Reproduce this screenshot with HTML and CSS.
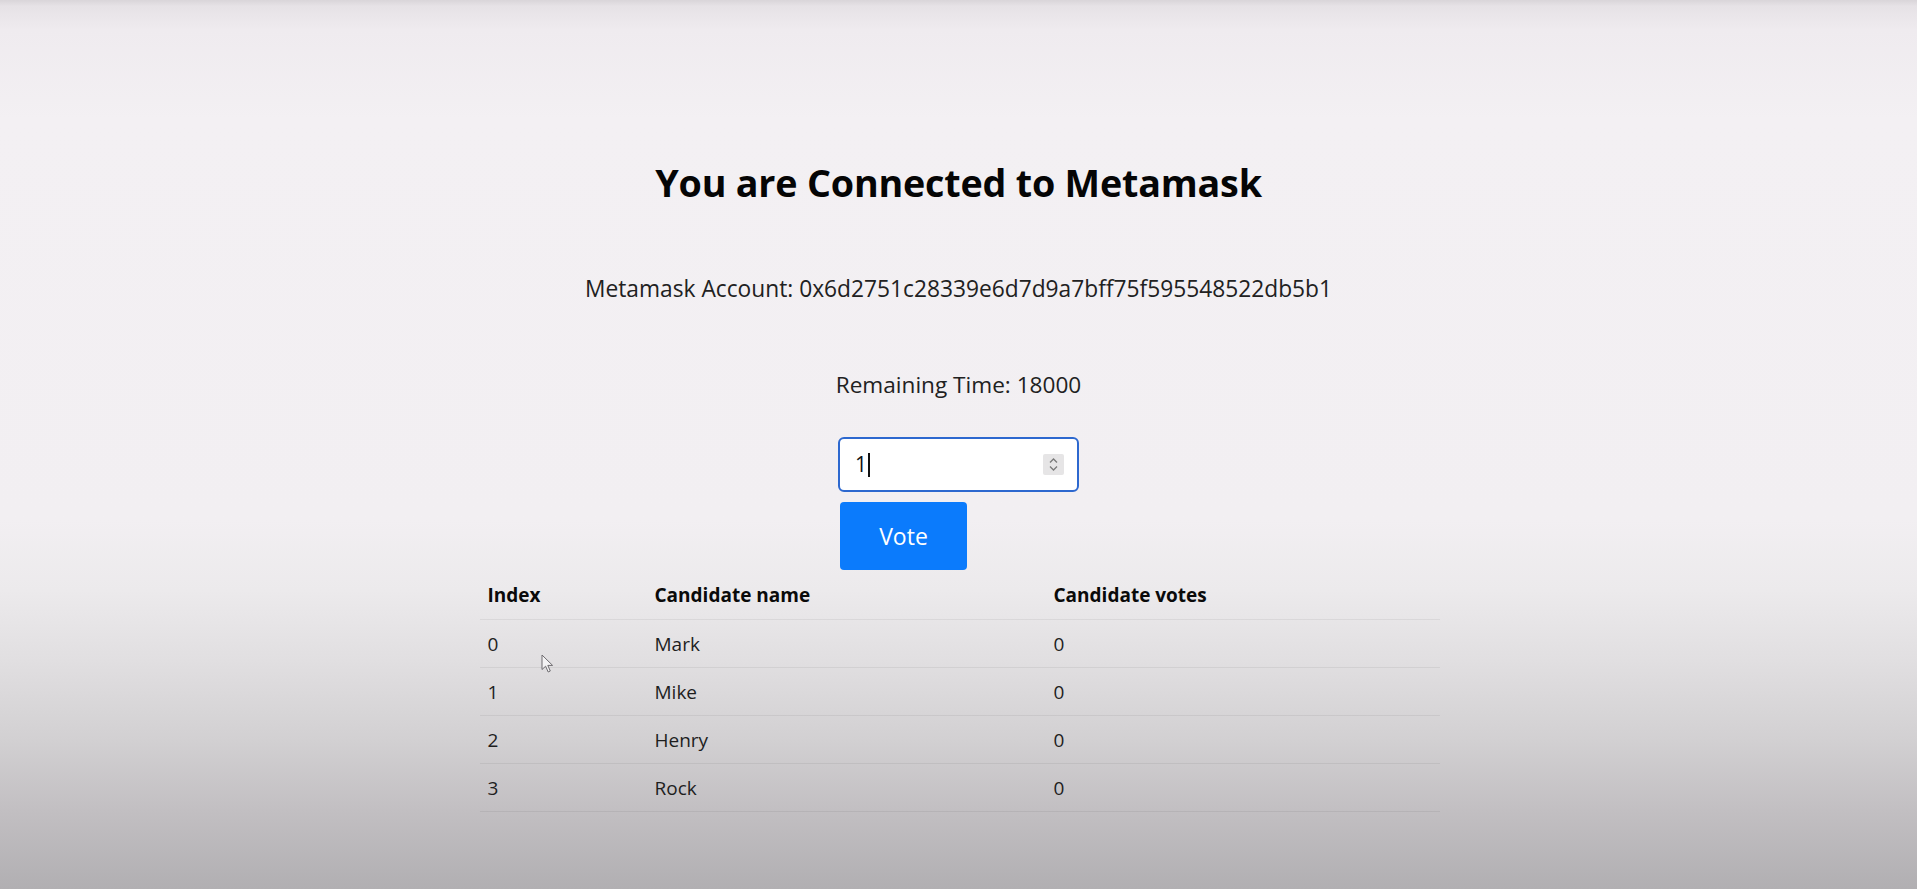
FILE: index.html
```html
<!DOCTYPE html>
<html lang="en">
<head>
<meta charset="utf-8">
<title>Voting dApp</title>
<link rel="stylesheet" href="styles.css">
</head>
<body>
<main class="page">
  <h1 class="title">You are Connected to Metamask</h1>
  <p class="account">Metamask Account: 0x6d2751c28339e6d7d9a7bff75f595548522db5b1</p>
  <p class="remaining">Remaining Time: 18000</p>
  <div class="vote-form">
    <div class="number-input">
      <span class="value">1</span><span class="caret"></span>
      <span class="spinner">
        <svg width="21" height="21" viewBox="0 0 21 21">
          <path d="M7 8.5 L10.5 5 L14 8.5" fill="none" stroke="#7a7a7a" stroke-width="1.3"/>
          <path d="M7 12.5 L10.5 16 L14 12.5" fill="none" stroke="#7a7a7a" stroke-width="1.3"/>
        </svg>
      </span>
    </div>
    <button class="vote-btn" type="button">Vote</button>
  </div>
  <table class="candidates">
    <colgroup>
      <col class="col-index">
      <col class="col-name">
      <col class="col-votes">
    </colgroup>
    <thead>
      <tr><th>Index</th><th>Candidate name</th><th>Candidate votes</th></tr>
    </thead>
    <tbody>
      <tr><td>0</td><td>Mark</td><td>0</td></tr>
      <tr><td>1</td><td>Mike</td><td>0</td></tr>
      <tr><td>2</td><td>Henry</td><td>0</td></tr>
      <tr><td>3</td><td>Rock</td><td>0</td></tr>
    </tbody>
  </table>
</main>
<svg class="cursor" width="14" height="20" viewBox="0 0 14 20">
  <path d="M1 1 L1 15.5 L4.6 12.2 L7.2 18 L9.3 17 L6.8 11.4 L11.6 11.4 Z" fill="#f4f3f4" stroke="#6e6c70" stroke-width="1" stroke-linejoin="round"/>
</svg>
</body>
</html>
```
FILE: styles.css
```css
html, body {
  margin: 0;
  padding: 0;
}
body {
  height: 889px;
  overflow: hidden;
  font-family: "Open Sans", "Noto Sans", sans-serif;
  color: #212121;
  background: linear-gradient(to bottom,
    #d9d5d9 0px,
    #e6e2e6 6px,
    #efebef 30px,
    #f3f0f3 120px,
    #f2eff2 520px,
    #eceaec 590px,
    #e1dfe1 660px,
    #d2d0d2 740px,
    #c2bfc2 810px,
    #b1afb2 889px);
  position: relative;
}
.page {
  display: flex;
  flex-direction: column;
  align-items: center;
}
.title {
  margin: 159px 0 0;
  font-size: 37.7px;
  line-height: 48px;
  font-weight: 700;
  color: #050505;
  letter-spacing: -0.2px;
}
.account {
  margin: 65px 0 0;
  font-size: 22.75px;
  line-height: 34px;
}
.remaining {
  margin: 62px 0 0;
  font-size: 22.6px;
  line-height: 34px;
}
.vote-form {
  margin-top: 35px;
  display: flex;
  flex-direction: column;
  align-items: flex-start;
  gap: 10px;
}
.number-input {
  box-sizing: border-box;
  width: 241px;
  height: 55px;
  border: 2px solid #2d68cf;
  border-radius: 6px;
  background: #ffffff;
  display: flex;
  align-items: center;
  padding: 0 13px 0 15px;
  font-size: 21px;
  color: #111;
}
.value {
  line-height: 1;
}
.caret {
  width: 2px;
  height: 24px;
  background: #111;
  margin-left: 1px;
}
.spinner {
  margin-left: auto;
  width: 21px;
  height: 21px;
  background: #e6e5e6;
  border-radius: 2px;
  display: flex;
}
.vote-btn {
  margin-left: 2px;
  width: 127px;
  height: 68px;
  border: 0;
  border-radius: 4px;
  background: #0b7bfc;
  color: #ffffff;
  font-family: "Open Sans", "Noto Sans", sans-serif;
  font-size: 23px;
  padding: 0;
}
.candidates {
  margin: 2px 0 0 2px;
  width: 960px;
  border-collapse: collapse;
  table-layout: fixed;
  font-size: 19px;
  color: #1e1e1e;
}
.col-index { width: 167px; }
.col-name { width: 399px; }
.col-votes { width: 394px; }
.candidates th,
.candidates td {
  text-align: left;
  padding: 9px 8px;
  line-height: 29px;
  border-bottom: 1px solid rgba(0, 0, 0, 0.06);
}
.candidates th {
  font-weight: 700;
  color: #0a0a0a;
}
.candidates td {
  padding-top: 10px;
  padding-bottom: 8px;
}
.cursor {
  position: absolute;
  left: 541px;
  top: 654px;
}
```
